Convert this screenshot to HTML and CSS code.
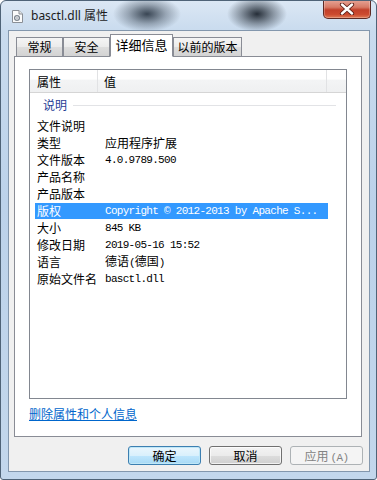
FILE: index.html
```html
<!DOCTYPE html>
<html lang="zh-CN">
<head>
<meta charset="utf-8">
<title>basctl.dll 属性</title>
<link rel="stylesheet" href="styles.css">
</head>
<body>
<div class="window">
  <div class="titlebar">
    <svg class="ticon" width="11" height="13" viewBox="0 0 11 13">
      <path d="M0.5 0.5 H7 L10.5 4 V12.5 H0.5 Z" fill="#fbfbfb" stroke="#8a8f96"/>
      <path d="M7 0.5 V4 H10.5" fill="#e4e4e4" stroke="#8a8f96"/>
      <circle cx="5" cy="8" r="2.4" fill="none" stroke="#7e8791" stroke-width="1.3"/>
      <circle cx="5" cy="8" r="0.8" fill="#7e8791"/>
    </svg>
    <span class="title">basctl.dll 属性</span>
    <div class="close">
      <svg width="16" height="12" viewBox="0 0 16 12">
        <path d="M3 1.5 L13 10.5 M13 1.5 L3 10.5" stroke="#5a1d16" stroke-width="4.2" stroke-linecap="round"/>
        <path d="M3 1.5 L13 10.5 M13 1.5 L3 10.5" stroke="#ffffff" stroke-width="2.4" stroke-linecap="round"/>
      </svg>
    </div>
  </div>
  <div class="client">
    <div class="tabs">
      <div class="tab w1">常规</div>
      <div class="tab w2">安全</div>
      <div class="tab sel">详细信息</div>
      <div class="tab w4">以前的版本</div>
    </div>
    <div class="panel">
      <div class="listbox">
        <div class="header">
          <div class="hc h1">属性</div>
          <div class="hc h2">值</div>
          <div class="hc h3"></div>
        </div>
        <div class="group"><span class="glabel">说明</span><i class="gline"></i></div>
        <div class="rows">
          <div class="row"><span class="k">文件说明</span><span class="v"></span></div>
          <div class="row"><span class="k">类型</span><span class="v">应用程序扩展</span></div>
          <div class="row"><span class="k">文件版本</span><span class="v mono">4.0.9789.500</span></div>
          <div class="row"><span class="k">产品名称</span><span class="v"></span></div>
          <div class="row"><span class="k">产品版本</span><span class="v"></span></div>
          <div class="row hl"><span class="k">版权</span><span class="v mono">Copyright © 2012-2013 by Apache S...</span></div>
          <div class="row"><span class="k">大小</span><span class="v mono">845 KB</span></div>
          <div class="row"><span class="k">修改日期</span><span class="v mono">2019-05-16 15:52</span></div>
          <div class="row"><span class="k">语言</span><span class="v">德语<span class="paren">(</span>德国<span class="paren">)</span></span></div>
          <div class="row"><span class="k">原始文件名</span><span class="v mono">basctl.dll</span></div>
        </div>
      </div>
      <a class="link" href="#">删除属性和个人信息</a>
    </div>
    <div class="buttons">
      <div class="btn def">确定</div>
      <div class="btn">取消</div>
      <div class="btn dis">应用<span class="acc">(A)</span></div>
    </div>
  </div>
</div>
</body>
</html>
```
FILE: styles.css
```css
html, body {
  margin: 0;
  padding: 0;
  background: #ffffff;
}

.window {
  width: 377px;
  height: 480px;
  box-sizing: border-box;
  border: 1px solid #4f6377;
  border-radius: 6px 6px 3px 3px;
  background:
    radial-gradient(ellipse 34px 18px at 146px 13px, rgba(40,52,66,0.9), rgba(40,52,66,0.35) 55%, rgba(40,52,66,0) 100%),
    radial-gradient(ellipse 30px 18px at 256px 13px, rgba(28,36,46,0.95), rgba(28,36,46,0.4) 55%, rgba(28,36,46,0) 100%),
    linear-gradient(180deg, #dbe7f4 0px, #c9dbee 30px, #bcd2ea 200px, #c3d7ec 480px);
  display: flex;
  flex-direction: column;
  overflow: hidden;
  font-family: "Noto Sans CJK SC", "Noto Sans", sans-serif;
}

.titlebar {
  height: 29px;
  display: flex;
  align-items: center;
  padding-left: 11px;
  flex-shrink: 0;
}

.ticon {
  display: block;
  margin-top: 1px;
}

.title {
  margin-left: 8px;
  font-family: "Noto Sans", "Noto Sans CJK SC", sans-serif;
  font-size: 12px;
  color: #1c1c1c;
  line-height: 16px;
  margin-top: 1px;
}

.close {
  align-self: flex-start;
  margin-top: -1px;
  margin-left: auto;
  margin-right: 5px;
  width: 48px;
  height: 19px;
  box-sizing: border-box;
  border: 1px solid #5e2a24;
  border-top: none;
  border-radius: 0 0 5px 5px;
  background: linear-gradient(180deg, #e7a597 0%, #d77a66 40%, #c2402a 55%, #cc4a2f 80%, #e07a55 100%);
  display: flex;
  align-items: center;
  justify-content: center;
  box-shadow: inset 0 0 0 1px rgba(255,255,255,0.25);
}

.client {
  margin: 0 6px 7px 7px;
  height: 442px;
  box-sizing: border-box;
  border: 1px solid #8397ad;
  background: #f0f0f0;
  display: flex;
  flex-direction: column;
}

.tabs {
  display: flex;
  align-items: flex-end;
  padding-left: 7px;
  margin-top: 4px;
  height: 22px;
  margin-bottom: -1px;
  position: relative;
  z-index: 1;
}

.tab {
  box-sizing: border-box;
  height: 20px;
  border: 1px solid #898c95;
  background: linear-gradient(180deg, #f5f5f5 0%, #ebebeb 50%, #dddddd 51%, #d3d3d3 100%);
  font-size: 12px;
  line-height: 18px;
  color: #000;
  text-align: center;
}

.w1, .w2 { width: 47px; }
.w4 { width: 69px; }

.tab.sel {
  width: 63px;
  height: 23px;
  background: #ffffff;
  border-bottom-color: #ffffff;
  line-height: 19px;
  font-size: 13px;
}

.panel {
  margin-left: 5px;
  width: 348px;
  height: 381px;
  box-sizing: border-box;
  border: 1px solid #898c95;
  background: #ffffff;
  display: flex;
  flex-direction: column;
  align-items: flex-start;
}

.listbox {
  margin-top: 12px;
  margin-left: 14px;
  width: 318px;
  height: 330px;
  box-sizing: border-box;
  border: 1px solid #828790;
  background: #ffffff;
}

.header {
  display: flex;
  height: 23px;
  box-sizing: border-box;
  border-bottom: 1px solid #d5d5d5;
  background: linear-gradient(180deg, #ffffff 0%, #ffffff 42%, #f3f4f5 45%, #eff0f1 100%);
}

.hc {
  font-size: 12px;
  line-height: 20px;
  padding-top: 2px;
  color: #000;
  box-sizing: border-box;
  border-right: 1px solid #e1e2e4;
}

.h1 { width: 68px; padding-left: 7px; }
.h2 { width: 229px; padding-left: 6px; }
.h3 { flex: 1; border-right: none; }

.group {
  height: 24px;
  display: flex;
  align-items: center;
  padding-left: 13px;
  padding-right: 10px;
}

.glabel {
  font-size: 12px;
  color: #1f3d96;
  line-height: 16px;
}

.gline {
  flex: 1;
  height: 1px;
  background: #e2e3e6;
  margin-left: 6px;
}

.rows {
  display: flex;
  flex-direction: column;
  padding-left: 5px;
  padding-top: 1px;
}

.row {
  display: flex;
  width: 293px;
  height: 16px;
  margin-bottom: 1px;
  align-items: center;
  font-size: 12px;
  color: #000;
}

.row.hl {
  background: #3399ff;
  color: #ffffff;
}

.k {
  width: 63px;
  padding-left: 2px;
  box-sizing: border-box;
  white-space: nowrap;
  line-height: 16px;
}

.v {
  padding-left: 7px;
  white-space: nowrap;
  line-height: 16px;
}

.mono {
  font-family: "Liberation Mono", "DejaVu Sans Mono", monospace;
  font-size: 11px;
  letter-spacing: -0.7px;
}

.paren {
  font-family: "Liberation Mono", monospace;
  font-size: 11px;
  letter-spacing: -1px;
}

.link {
  margin-top: 7px;
  margin-left: 14px;
  font-size: 12px;
  line-height: 16px;
  color: #0066cc;
  text-decoration: underline;
}

.buttons {
  display: flex;
  justify-content: flex-end;
  gap: 8px;
  margin-top: 9px;
  margin-right: 6px;
}

.btn {
  width: 73px;
  height: 19px;
  box-sizing: border-box;
  border: 1px solid #707070;
  border-radius: 3px;
  background: linear-gradient(180deg, #f3f3f3 0%, #ebebeb 50%, #dddddd 51%, #cfcfcf 100%);
  box-shadow: inset 0 0 0 1px rgba(255,255,255,0.7);
  font-size: 12px;
  line-height: 17px;
  text-align: center;
  color: #000;
}

.btn.def {
  border-color: #3c7fb1;
  box-shadow: inset 0 0 0 1px #bfe7f7;
  background: linear-gradient(180deg, #eaf6fd 0%, #d9f0fc 50%, #bee6fd 51%, #a7d9f5 100%);
}

.btn.dis {
  border-color: #adb2b5;
  background: #f4f4f4;
  box-shadow: none;
  color: #838383;
}

.acc {
  font-family: "Liberation Mono", monospace;
  font-size: 11px;
  letter-spacing: -0.6px;
  margin-left: 2px;
}
```
